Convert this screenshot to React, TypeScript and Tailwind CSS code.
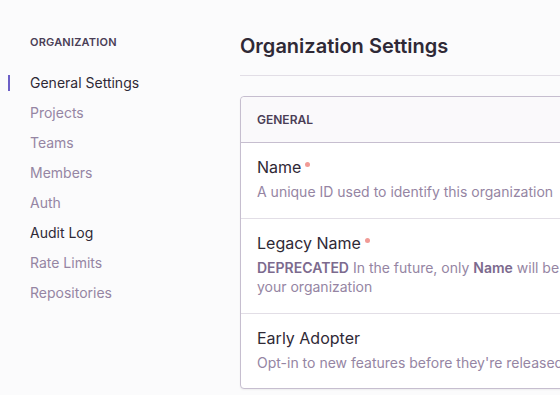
import React from 'react';

const navItems = [
  { label: 'General Settings', active: true },
  { label: 'Projects' },
  { label: 'Teams' },
  { label: 'Members' },
  { label: 'Auth' },
  { label: 'Audit Log', hover: true },
  { label: 'Rate Limits' },
  { label: 'Repositories' },
];

function Sidebar() {
  return (
    <aside className="w-[220px] shrink-0 pl-[30px] pt-[35px]">
      <div className="text-[11px] font-semibold uppercase leading-[14px] tracking-[0.2px] text-[#4a3e56]">
        Organization
      </div>
      <nav className="mt-[19px] flex flex-col">
        {navItems.map((item) => (
          <div key={item.label} className="relative h-[30px] leading-[30px] text-[14px]">
            {item.active && (
              <span className="absolute left-[-22px] top-[7px] h-[16px] w-[2px] bg-[#6c5fc7]" />
            )}
            <span className={item.active || item.hover ? 'text-[#2f2936]' : 'text-[#9585a3]'}>
              {item.label}
            </span>
          </div>
        ))}
      </nav>
    </aside>
  );
}

function Required() {
  return <span className="ml-[4px] inline-block h-[5px] w-[5px] -translate-y-[6px] rounded-full bg-[#f19b96]" />;
}

interface FieldProps {
  label: string;
  required?: boolean;
  children: React.ReactNode;
  last?: boolean;
}

function Field({ label, required, children, last }: FieldProps) {
  return (
    <div className={`px-4 pt-[14px] pb-4 ${last ? '' : 'border-b border-[#e2dee6]'}`}>
      <div className="text-[16px] leading-5 text-[#2f2936]">
        {label}
        {required && <Required />}
      </div>
      <div className="mt-[5px] w-[420px] text-[14px] leading-[19.5px] text-[#9585a3]">{children}</div>
    </div>
  );
}

export default function App() {
  return (
    <div
      className="flex h-[395px] w-[560px] overflow-hidden bg-[#fbfbfc]"
      style={{ fontFamily: 'Inter, "Noto Sans", sans-serif' }}
    >
      <Sidebar />
      <main className="min-w-0 flex-1 pl-[20px]">
        <div className="w-[700px]">
          <div className="flex h-[76px] items-end border-b border-[#e2dee6] pb-[17px]">
            <h1 className="text-[20px] font-semibold leading-6 text-[#2f2936]">Organization Settings</h1>
          </div>
          <div className="mt-[20px] rounded border border-[#c6becf] bg-white shadow-[0_1px_2px_rgba(0,0,0,0.06)]">
            <div className="flex h-[46px] items-center rounded-t border-b border-[#c6becf] bg-[#faf9fb] px-4 text-[12px] font-semibold uppercase text-[#4a3e56]">
              General
            </div>
            <Field label="Name" required>
              A unique ID used to identify this organization
            </Field>
            <Field label="Legacy Name" required>
              <b className="font-semibold text-[#7c6a8e]">DEPRECATED</b> In the future, only{' '}
              <b className="font-semibold text-[#7c6a8e]">Name</b> will be used to identify your organization
            </Field>
            <Field label="Early Adopter" last>
              Opt-in to new features before they're released to the public
            </Field>
          </div>
        </div>
      </main>
    </div>
  );
}
